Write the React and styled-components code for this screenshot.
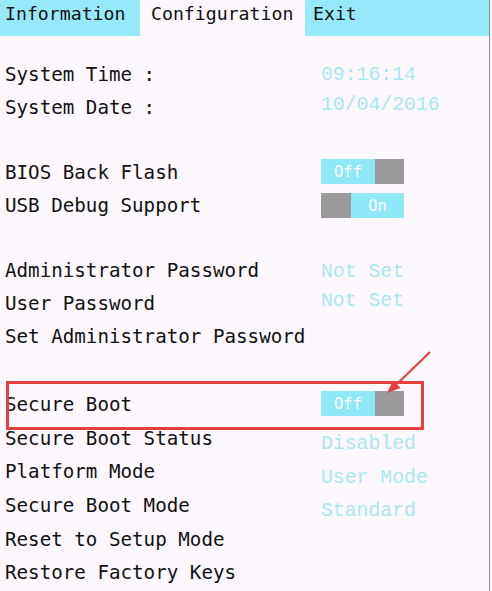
import React from "react";
import styled, { createGlobalStyle } from "styled-components";

const GlobalStyle = createGlobalStyle`
  html, body { margin: 0; padding: 0; background: #fcf8fe; }
  #root { width: 492px; height: 591px; }
`;

const CYAN = "#95e9f9";
const VALUE = "#a9e7f4";

const Page = styled.div`
  position: relative;
  width: 489px;
  height: 591px;
  overflow: hidden;
  background: #fcf8fe;
  border-right: 1px solid #8592a0;
  font-family: "DejaVu Sans Mono", "Liberation Mono", monospace;
  color: #111;
`;

const TabBar = styled.div`
  display: flex;
  height: 36px;
  background: ${CYAN};
`;

const Tab = styled.div`
  width: ${(p) => (p.$w ? `${p.$w}px` : "auto")};
  flex: ${(p) => (p.$w ? "none" : "1")};
  box-sizing: border-box;
  padding-left: ${(p) => p.$pl}px;
  background: ${(p) => (p.$active ? "#fcf8fe" : "transparent")};
  font-size: 18.2px;
  line-height: 27px;
  white-space: nowrap;
`;

const Content = styled.div`
  padding-top: 22px;
`;

const Group = styled.div`
  margin-top: ${(p) => p.$mt || 0}px;
`;

const Row = styled.div`
  display: flex;
  align-items: center;
  height: ${(p) => p.$h || 33}px;
  padding-left: 5px;
`;

const Label = styled.div`
  width: 316px;
  flex: none;
  font-size: 19.2px;
  white-space: nowrap;
`;

const Value = styled.div`
  font-family: "Liberation Mono", "DejaVu Sans Mono", monospace;
  font-size: 19.8px;
  color: ${VALUE};
  white-space: nowrap;
  margin-top: ${(p) => (p.$dy || 0) * 2}px;
`;

const Toggle = styled.div`
  display: flex;
  width: 83px;
  height: 25px;
  margin-top: ${(p) => (p.$dy || 0) * 2}px;
`;

const Seg = styled.div`
  width: ${(p) => p.$w}px;
  background: ${(p) => (p.$on ? "#8fe8f8" : "#9b9999")};
  color: #fff;
  font-family: "DejaVu Sans Mono", monospace;
  font-size: 15.5px;
  display: flex;
  align-items: center;
  justify-content: center;
`;

const Highlight = styled.div`
  position: absolute;
  left: 6px;
  top: 381px;
  width: 418px;
  height: 49px;
  box-sizing: border-box;
  border: 3px solid #e5403d;
  pointer-events: none;
`;

const ArrowSvg = styled.svg`
  position: absolute;
  left: 0;
  top: 0;
  width: 492px;
  height: 591px;
  pointer-events: none;
`;

function Switch({ on, dy }) {
  return on ? (
    <Toggle $dy={dy}>
      <Seg $w={30} />
      <Seg $w={53} $on>On</Seg>
    </Toggle>
  ) : (
    <Toggle $dy={dy}>
      <Seg $w={54} $on>Off</Seg>
      <Seg $w={29} />
    </Toggle>
  );
}

export default function App() {
  return (
    <>
      <GlobalStyle />
      <Page>
        <TabBar>
          <Tab $w={140} $pl={5}>Information</Tab>
          <Tab $w={165} $pl={11} $active>Configuration</Tab>
          <Tab $pl={8}>Exit</Tab>
        </TabBar>
        <Content>
          <Group>
            <Row>
              <Label>System Time :</Label>
              <Value>09:16:14</Value>
            </Row>
            <Row>
              <Label>System Date :</Label>
              <Value $dy={-3}>10/04/2016</Value>
            </Row>
          </Group>
          <Group $mt={32}>
            <Row>
              <Label>BIOS Back Flash</Label>
              <Switch dy={-1} />
            </Row>
            <Row>
              <Label>USB Debug Support</Label>
              <Switch on />
            </Row>
          </Group>
          <Group $mt={32}>
            <Row>
              <Label>Administrator Password</Label>
              <Value $dy={1}>Not Set</Value>
            </Row>
            <Row>
              <Label>User Password</Label>
              <Value $dy={-3}>Not Set</Value>
            </Row>
            <Row>
              <Label>Set Administrator Password</Label>
            </Row>
          </Group>
          <Group $mt={35}>
            <Row $h={33.6}>
              <Label>Secure Boot</Label>
              <Switch dy={-1} />
            </Row>
            <Row $h={33.6}>
              <Label>Secure Boot Status</Label>
              <Value $dy={6}>Disabled</Value>
            </Row>
            <Row $h={33.6}>
              <Label>Platform Mode</Label>
              <Value $dy={6}>User Mode</Value>
            </Row>
            <Row $h={33.6}>
              <Label>Secure Boot Mode</Label>
              <Value $dy={5}>Standard</Value>
            </Row>
            <Row $h={33.6}>
              <Label>Reset to Setup Mode</Label>
            </Row>
            <Row $h={33.6}>
              <Label>Restore Factory Keys</Label>
            </Row>
          </Group>
        </Content>
        <Highlight />
        <ArrowSvg viewBox="0 0 492 591">
          <line x1="430" y1="352" x2="397" y2="384" stroke="#e5403d" strokeWidth="2" />
          <polygon points="387,393 400.5,388 393,380.5" fill="#e5403d" />
        </ArrowSvg>
      </Page>
    </>
  );
}
